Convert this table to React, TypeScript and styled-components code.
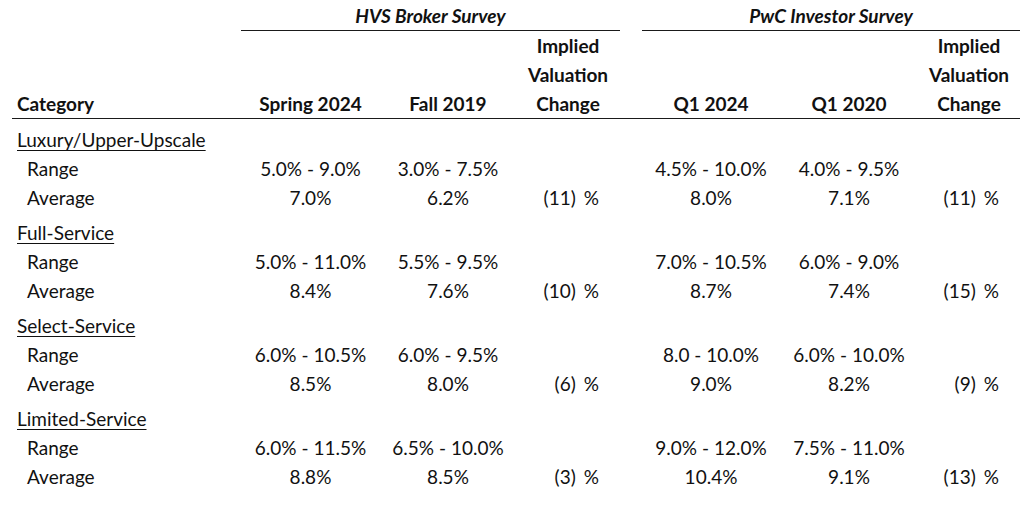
import React from 'react';
import styled, { createGlobalStyle } from 'styled-components';

const GlobalStyle = createGlobalStyle`
  html, body {
    margin: 0;
    padding: 0;
    background: #ffffff;
  }
  body {
    font-family: Lato, 'Open Sans', 'Liberation Sans', sans-serif;
    color: #111111;
  }
`;

interface Group {
  name: string;
  range: string[];
  average: string[];
  change: [string, string];
}

const groups: Group[] = [
  {
    name: 'Luxury/Upper-Upscale',
    range: ['5.0% - 9.0%', '3.0% - 7.5%', '4.5% - 10.0%', '4.0% - 9.5%'],
    average: ['7.0%', '6.2%', '8.0%', '7.1%'],
    change: ['(11)', '(11)'],
  },
  {
    name: 'Full-Service',
    range: ['5.0% - 11.0%', '5.5% - 9.5%', '7.0% - 10.5%', '6.0% - 9.0%'],
    average: ['8.4%', '7.6%', '8.7%', '7.4%'],
    change: ['(10)', '(15)'],
  },
  {
    name: 'Select-Service',
    range: ['6.0% - 10.5%', '6.0% - 9.5%', '8.0 - 10.0%', '6.0% - 10.0%'],
    average: ['8.5%', '8.0%', '9.0%', '8.2%'],
    change: ['(6)', '(9)'],
  },
  {
    name: 'Limited-Service',
    range: ['6.0% - 11.5%', '6.5% - 10.0%', '9.0% - 12.0%', '7.5% - 11.0%'],
    average: ['8.8%', '8.5%', '10.4%', '9.1%'],
    change: ['(3)', '(13)'],
  },
];

const columns = '229px 139px 136px 104px 22px 138px 138px 102px';

const Table = styled.div`
  width: 1008px;
  margin-left: 12px;
  padding-top: 1px;
  font-size: 19px;
`;

const Row = styled.div`
  display: grid;
  grid-template-columns: ${columns};
  height: 29px;
  line-height: 29px;
  align-items: center;
`;

const SurveyRow = styled.div`
  display: grid;
  grid-template-columns: 229px 379px 22px 378px;
  height: 28px;
  line-height: 29px;
`;

const SurveyTitle = styled.div<{ $col: number }>`
  grid-column: ${p => p.$col};
  text-align: center;
  font-style: italic;
  font-weight: 700;
  border-bottom: 1.5px solid #1a1a1a;
`;

const HeaderRow = styled.div`
  display: grid;
  grid-template-columns: ${columns};
  align-items: end;
  padding-top: 2px;
  line-height: 29px;
  font-weight: 700;
  border-bottom: 1.5px solid #1a1a1a;
`;

const HeadCell = styled.div<{ $left?: boolean }>`
  text-align: ${p => (p.$left ? 'left' : 'center')};
  padding-left: ${p => (p.$left ? '5px' : '0')};
`;

const GroupBlock = styled.div`
  padding-top: 6px;
`;

const GroupName = styled.div`
  padding-left: 5px;
  text-decoration: underline;
  text-underline-offset: 3px;
  text-decoration-thickness: 1px;
  white-space: nowrap;
`;

const Label = styled.div`
  padding-left: 15px;
`;

const Value = styled.div`
  text-align: center;
  white-space: nowrap;
`;

const Change = styled.div`
  text-align: right;
  padding-right: 21px;
  white-space: nowrap;

  span {
    margin-left: 8px;
  }
`;

const Empty = styled.div``;

const App = () => {
  return (
    <>
      <GlobalStyle />
      <Table>
        <SurveyRow>
          <SurveyTitle $col={2}>HVS Broker Survey</SurveyTitle>
          <SurveyTitle $col={4}>PwC Investor Survey</SurveyTitle>
        </SurveyRow>
        <HeaderRow>
          <HeadCell $left>Category</HeadCell>
          <HeadCell>Spring 2024</HeadCell>
          <HeadCell>Fall 2019</HeadCell>
          <HeadCell>
            Implied
            <br />
            Valuation
            <br />
            Change
          </HeadCell>
          <Empty />
          <HeadCell>Q1 2024</HeadCell>
          <HeadCell>Q1 2020</HeadCell>
          <HeadCell>
            Implied
            <br />
            Valuation
            <br />
            Change
          </HeadCell>
        </HeaderRow>
        {groups.map(g => (
          <GroupBlock key={g.name}>
            <Row>
              <GroupName>{g.name}</GroupName>
            </Row>
            <Row>
              <Label>Range</Label>
              <Value>{g.range[0]}</Value>
              <Value>{g.range[1]}</Value>
              <Empty />
              <Empty />
              <Value>{g.range[2]}</Value>
              <Value>{g.range[3]}</Value>
              <Empty />
            </Row>
            <Row>
              <Label>Average</Label>
              <Value>{g.average[0]}</Value>
              <Value>{g.average[1]}</Value>
              <Change>
                {g.change[0]}
                <span>%</span>
              </Change>
              <Empty />
              <Value>{g.average[2]}</Value>
              <Value>{g.average[3]}</Value>
              <Change>
                {g.change[1]}
                <span>%</span>
              </Change>
            </Row>
          </GroupBlock>
        ))}
      </Table>
    </>
  );
};

export default App;
